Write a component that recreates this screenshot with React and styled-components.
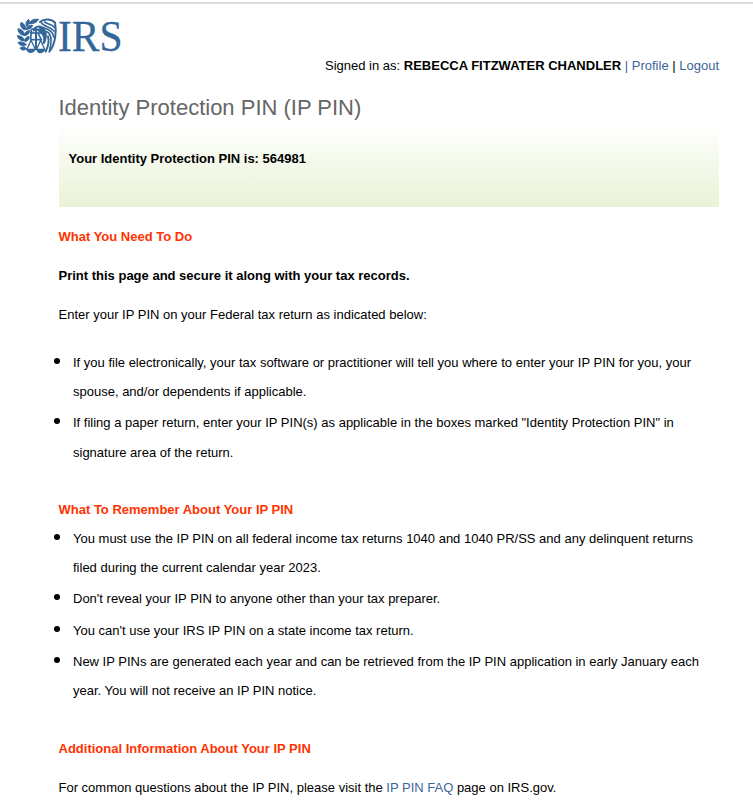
import React from "react";
import styled, { createGlobalStyle } from "styled-components";

const GlobalStyle = createGlobalStyle`
  * { box-sizing: border-box; }
  body {
    margin: 0;
    background: #fff;
    color: #000;
    font-family: "Liberation Sans", Arial, sans-serif;
    font-size: 13px;
    overflow: hidden;
  }
`;

const Page = styled.main`
  height: 802px;
  padding-top: 2px;
  overflow: hidden;
`;

const TopRule = styled.div`
  height: 2px;
  background: #dcdcdc;
`;

const Header = styled.header`
  height: 87px;
  padding: 12px 34px 0 16px;
`;

const Logo = styled.svg`
  display: block;
  width: 110px;
  height: 40px;
  overflow: visible;
`;

const Account = styled.div`
  display: flex;
  justify-content: flex-end;
  line-height: 20px;
  white-space: pre;
`;

const Link = styled.a`
  color: #3c6698;
  text-decoration: none;
`;

const Divider = styled.span`
  color: ${(p) => (p.$muted ? "#3c6698" : "#000")};
`;

const Content = styled.div`
  margin: 0 34px 0 58.5px;
`;

const Title = styled.h1`
  margin: 0;
  height: 38px;
  color: #666;
  font-size: 22px;
  font-weight: 400;
  line-height: 34px;
  white-space: nowrap;
`;

const PinPanel = styled.section`
  height: 78px;
  margin-left: 0.5px;
  padding: 20px 9.5px;
  background: linear-gradient(#fdfefb, #e8f3d6);
  font-weight: 700;
  line-height: 20px;
`;

const Heading = styled.h2`
  margin: ${(p) => p.$top}px 0 0;
  color: #ff3300;
  font-size: 13px;
  font-weight: 700;
  line-height: 20px;
`;

const Paragraph = styled.p`
  margin: 19px 0 0;
  font-weight: ${(p) => (p.$strong ? 700 : 400)};
  line-height: 20px;
  white-space: nowrap;
`;

const List = styled.ul`
  display: flex;
  flex-direction: column;
  margin: ${(p) => p.$top}px 0 0 -4.5px;
  padding: 0;
  list-style: none;
`;

const Item = styled.li`
  display: grid;
  grid-template-columns: 19px 1fr;
  margin-bottom: ${(p) => p.$gap || 0}px;
  line-height: ${(p) => p.$leading || 29}px;
  white-space: nowrap;

  &::before {
    content: "";
    width: 6px;
    height: 6px;
    margin-top: 10px;
    border-radius: 50%;
    background: #000;
  }
`;

const Line = styled.span`
  display: block;
`;

function IrsLogo() {
  return (
    <Logo viewBox="0 0 110 40" role="img" aria-label="IRS">
      <g transform="translate(1 2) scale(.3333)" fill="#336699">
        {/* laurel branch */}
        <g stroke="#336699" strokeWidth="3" strokeLinejoin="round">
          <path d="M65 4C50 2 40 7 36 17C50 18 59 14 65 4Z" />
          <path d="M35 4C27 10 25 17 29 25C37 18 39 11 35 4Z" />
          <path d="M12 13C9 25 14 33 25 36C28 26 23 18 12 13Z" />
          <path d="M47 22C37 20 29 25 27 34C37 35 44 31 47 22Z" />
          <path d="M3 32C3 43 10 51 22 52C22 41 15 34 3 32Z" />
          <path d="M38 38C29 38 22 44 22 53C32 52 37 47 38 38Z" />
          <path d="M1 53C4 64 11 69 23 68C21 59 12 53 1 53Z" />
          <path d="M36 55C27 57 22 63 24 71C33 69 38 63 36 55Z" />
          <path d="M3 74C9 83 18 85 28 80C23 73 13 69 3 74Z" />
          <path d="M9 91C15 98 22 98 28 92C23 85 16 85 9 91Z" />
        </g>
        {/* wing and feathers */}
        <g fill="none" stroke="#336699" strokeLinecap="round">
          <path d="M69 12C80 2 103 2 114 14C119 38 116 78 97 101" strokeWidth="6" />
          <path d="M73 14C80 27 101 25 111 39" strokeWidth="5" />
          <path d="M79 29C91 34 108 38 111 58" strokeWidth="5" />
          <path d="M87 41C101 44 107 63 98 94" strokeWidth="5" />
          <path d="M93 55C98 70 94 84 86 101" strokeWidth="6" />
          <path d="M83 12C92 19 106 18 113 29" strokeWidth="5" />
        </g>
        {/* head and breast */}
        <path d="M47 42L50 31C57 21 72 20 81 29C91 40 93 60 83 77L76 77C81 65 79 55 73 48C66 41 62 36 53 39Z" />
        <path d="M60 30L67 31" stroke="#fff" strokeWidth="3" />
        {/* balance */}
        <g fill="none" stroke="#336699" strokeWidth="5">
          <path d="M43 34L41 65M43 34L54 32M63 45L74 67" />
          <path d="M39 45L75 45" />
          <path d="M57 38L57 96" strokeWidth="6" />
          <path d="M39 65H75" strokeWidth="5" />
          <path d="M42 67L30 94H55ZM71 67L59 94H83Z" strokeWidth="4" />
        </g>
        <path d="M27 93H56Q52 105 41 105Q31 105 27 93ZM57 93H86Q80 106 69 106Q60 105 57 93Z" />
      </g>
      <text
        x="42"
        y="34.8"
        textLength="64.5"
        lengthAdjust="spacingAndGlyphs"
        fill="#336699"
        stroke="#336699"
        strokeWidth=".3"
        fontFamily='"Liberation Serif", serif'
        fontSize="45"
      >
        IRS
      </text>
    </Logo>
  );
}

export default function App() {
  return (
    <>
      <GlobalStyle />
      <Page>
        <TopRule />
        <Header>
          <IrsLogo />
          <Account>
            Signed in as: <b>REBECCA FITZWATER CHANDLER</b>
            <Divider $muted> | </Divider>
            <Link>Profile</Link>
            <Divider> | </Divider>
            <Link>Logout</Link>
          </Account>
        </Header>
        <Content>
          <Title>Identity Protection PIN (IP PIN)</Title>
          <PinPanel>Your Identity Protection PIN is: 564981</PinPanel>

          <Heading $top={20}>What You Need To Do</Heading>
          <Paragraph $strong>Print this page and secure it along with your tax records.</Paragraph>
          <Paragraph>Enter your IP PIN on your Federal tax return as indicated below:</Paragraph>
          <List $top={23}>
            <Item $gap={2}>
              <div>
                <Line>If you file electronically, your tax software or practitioner will tell you where to enter your IP PIN for you, your</Line>
                <Line>spouse, and/or dependents if applicable.</Line>
              </div>
            </Item>
            <Item $leading={30}>
              <div>
                <Line>If filing a paper return, enter your IP PIN(s) as applicable in the boxes marked "Identity Protection PIN" in</Line>
                <Line>signature area of the return.</Line>
              </div>
            </Item>
          </List>

          <Heading $top={32}>What To Remember About Your IP PIN</Heading>
          <List $top={4}>
            <Item $gap={2}>
              <div>
                <Line>You must use the IP PIN on all federal income tax returns 1040 and 1040 PR/SS and any delinquent returns</Line>
                <Line>filed during the current calendar year 2023.</Line>
              </div>
            </Item>
            <Item $gap={3}>
              <Line>Don't reveal your IP PIN to anyone other than your tax preparer.</Line>
            </Item>
            <Item $gap={2}>
              <Line>You can't use your IRS IP PIN on a state income tax return.</Line>
            </Item>
            <Item>
              <div>
                <Line>New IP PINs are generated each year and can be retrieved from the IP PIN application in early January each</Line>
                <Line>year. You will not receive an IP PIN notice.</Line>
              </div>
            </Item>
          </List>

          <Heading $top={34}>Additional Information About Your IP PIN</Heading>
          <Paragraph>
            For common questions about the IP PIN, please visit the <Link>IP PIN FAQ</Link> page on IRS.gov.
          </Paragraph>
        </Content>
      </Page>
    </>
  );
}
